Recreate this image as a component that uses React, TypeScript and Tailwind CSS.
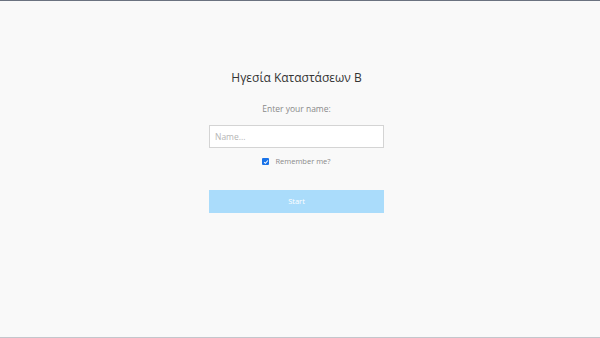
import { useState } from 'react';

export default function App() {
  const [name, setName] = useState('');
  const [remember, setRemember] = useState(true);

  return (
    <div className="flex h-[338px] w-full flex-col items-center border-t border-b border-t-[#6b7280] border-b-[#c4c6cc] bg-[#f9f9f9] pr-[7px] font-['Open_Sans',sans-serif]">
      <h1 className="mt-[68px] text-[12px] leading-[18px] text-[#333333]">Ηγεσία Καταστάσεων Β</h1>

      <p className="mt-[16px] text-[8.5px] leading-[12px] text-[#8a8a8a]">Enter your name:</p>

      <input
        type="text"
        value={name}
        onChange={(e) => setName(e.target.value)}
        placeholder="Name..."
        className="mt-[10px] h-[23px] w-[175px] border-[1.5px] border-[#d4d4d4] bg-white px-[5px] text-[8.5px] text-[#555] outline-none placeholder:text-[#b5b5b5]"
      />

      <label className="mt-[9px] flex h-[9px] items-center gap-[6px] text-[7.5px] leading-[9px] text-[#8a8a8a]">
        <input type="checkbox" checked={remember} onChange={(e) => setRemember(e.target.checked)} className="hidden" />
        <span className="flex h-[7px] w-[7px] items-center justify-center rounded-[1px] bg-[#1a73e8]">
          {remember && (
            <svg viewBox="0 0 8 8" className="h-[6px] w-[6px]">
              <path d="M1.5 4.2 L3.2 5.8 L6.5 2" fill="none" stroke="white" strokeWidth="1.4" />
            </svg>
          )}
        </span>
        Remember me?
      </label>

      <button className="mt-[24px] h-[23px] w-[175px] bg-[#aadcfb] pt-[1px] text-[7.5px] text-white">Start</button>
    </div>
  );
}
